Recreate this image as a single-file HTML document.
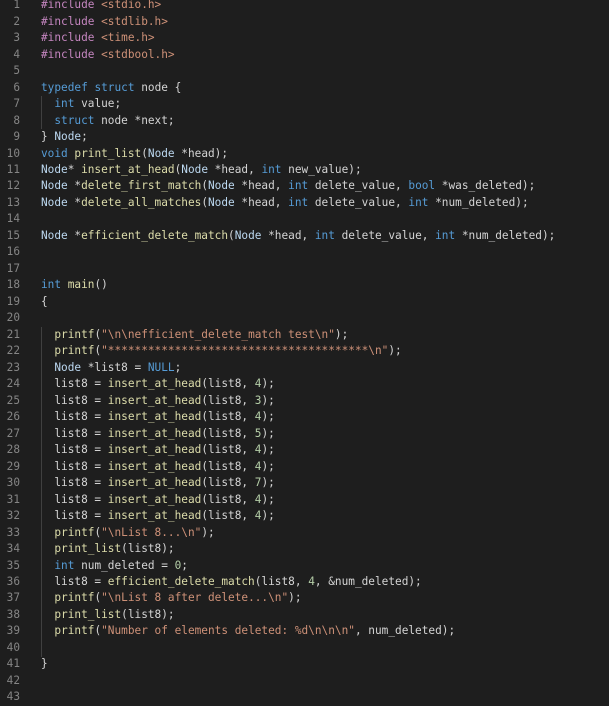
<!DOCTYPE html><html><head><style>
body{margin:0;background:#1e1e1e;width:609px;height:698px;overflow:hidden;font-family:"DejaVu Sans Mono","Liberation Mono",monospace;font-size:11.1px;}
.l{position:absolute;left:0;height:16.5px;line-height:16.5px;white-space:pre;color:#d4d4d4;width:609px}
.n{position:absolute;right:589px;color:#858585;text-align:right}
.c{position:absolute;left:41px}
.k{color:#569cd6}.p{color:#c586c0}.s{color:#ce9178}.f{color:#dcdcaa}.t{color:#bcd8f0}.m{color:#b5cea8}
.g{position:absolute;left:41px;width:1px;background:#404040}
</style></head><body>
<div class="g" style="top:96px;height:33px"></div>
<div class="g" style="top:327px;height:330px"></div>
<div id="w"></div>
<script>
var L=[
'<span class="p">#include</span> <span class="s">&lt;stdio.h&gt;</span>',
'<span class="p">#include</span> <span class="s">&lt;stdlib.h&gt;</span>',
'<span class="p">#include</span> <span class="s">&lt;time.h&gt;</span>',
'<span class="p">#include</span> <span class="s">&lt;stdbool.h&gt;</span>',
'',
'<span class="k">typedef</span> <span class="k">struct</span> node {',
'  <span class="k">int</span> value;',
'  <span class="k">struct</span> node *next;',
'} <span class="t">Node</span>;',
'<span class="k">void</span> <span class="f">print_list</span>(<span class="t">Node</span> *head);',
'<span class="t">Node</span>* <span class="f">insert_at_head</span>(<span class="t">Node</span> *head, <span class="k">int</span> new_value);',
'<span class="t">Node</span> *<span class="f">delete_first_match</span>(<span class="t">Node</span> *head, <span class="k">int</span> delete_value, <span class="k">bool</span> *was_deleted);',
'<span class="t">Node</span> *<span class="f">delete_all_matches</span>(<span class="t">Node</span> *head, <span class="k">int</span> delete_value, <span class="k">int</span> *num_deleted);',
'',
'<span class="t">Node</span> *<span class="f">efficient_delete_match</span>(<span class="t">Node</span> *head, <span class="k">int</span> delete_value, <span class="k">int</span> *num_deleted);',
'','',
'<span class="k">int</span> <span class="f">main</span>()',
'{',
'',
'  <span class="f">printf</span>(<span class="s">"\\n\\nefficient_delete_match test\\n"</span>);',
'  <span class="f">printf</span>(<span class="s">"***************************************\\n"</span>);',
'  <span class="t">Node</span> *list8 = <span class="k">NULL</span>;'];
var v=[4,3,4,5,4,4,7,4,4];
v.forEach(function(x){L.push('  list8 = <span class="f">insert_at_head</span>(list8, <span class="m">'+x+'</span>);');});
L=L.concat([
'  <span class="f">printf</span>(<span class="s">"\\nList 8...\\n"</span>);',
'  <span class="f">print_list</span>(list8);',
'  <span class="k">int</span> num_deleted = <span class="m">0</span>;',
'  list8 = <span class="f">efficient_delete_match</span>(list8, <span class="m">4</span>, &amp;num_deleted);',
'  <span class="f">printf</span>(<span class="s">"\\nList 8 after delete...\\n"</span>);',
'  <span class="f">print_list</span>(list8);',
'  <span class="f">printf</span>(<span class="s">"Number of elements deleted: %d\\n\\n\\n"</span>, num_deleted);',
'','}','','']);
var h='';
L.forEach(function(s,i){h+='<div class="l" style="top:'+(-2.8+i*16.48)+'px"><span class="n">'+(i+1)+'</span><span class="c">'+s+'</span></div>';});
document.getElementById('w').innerHTML=h;
</script>
</body></html>
